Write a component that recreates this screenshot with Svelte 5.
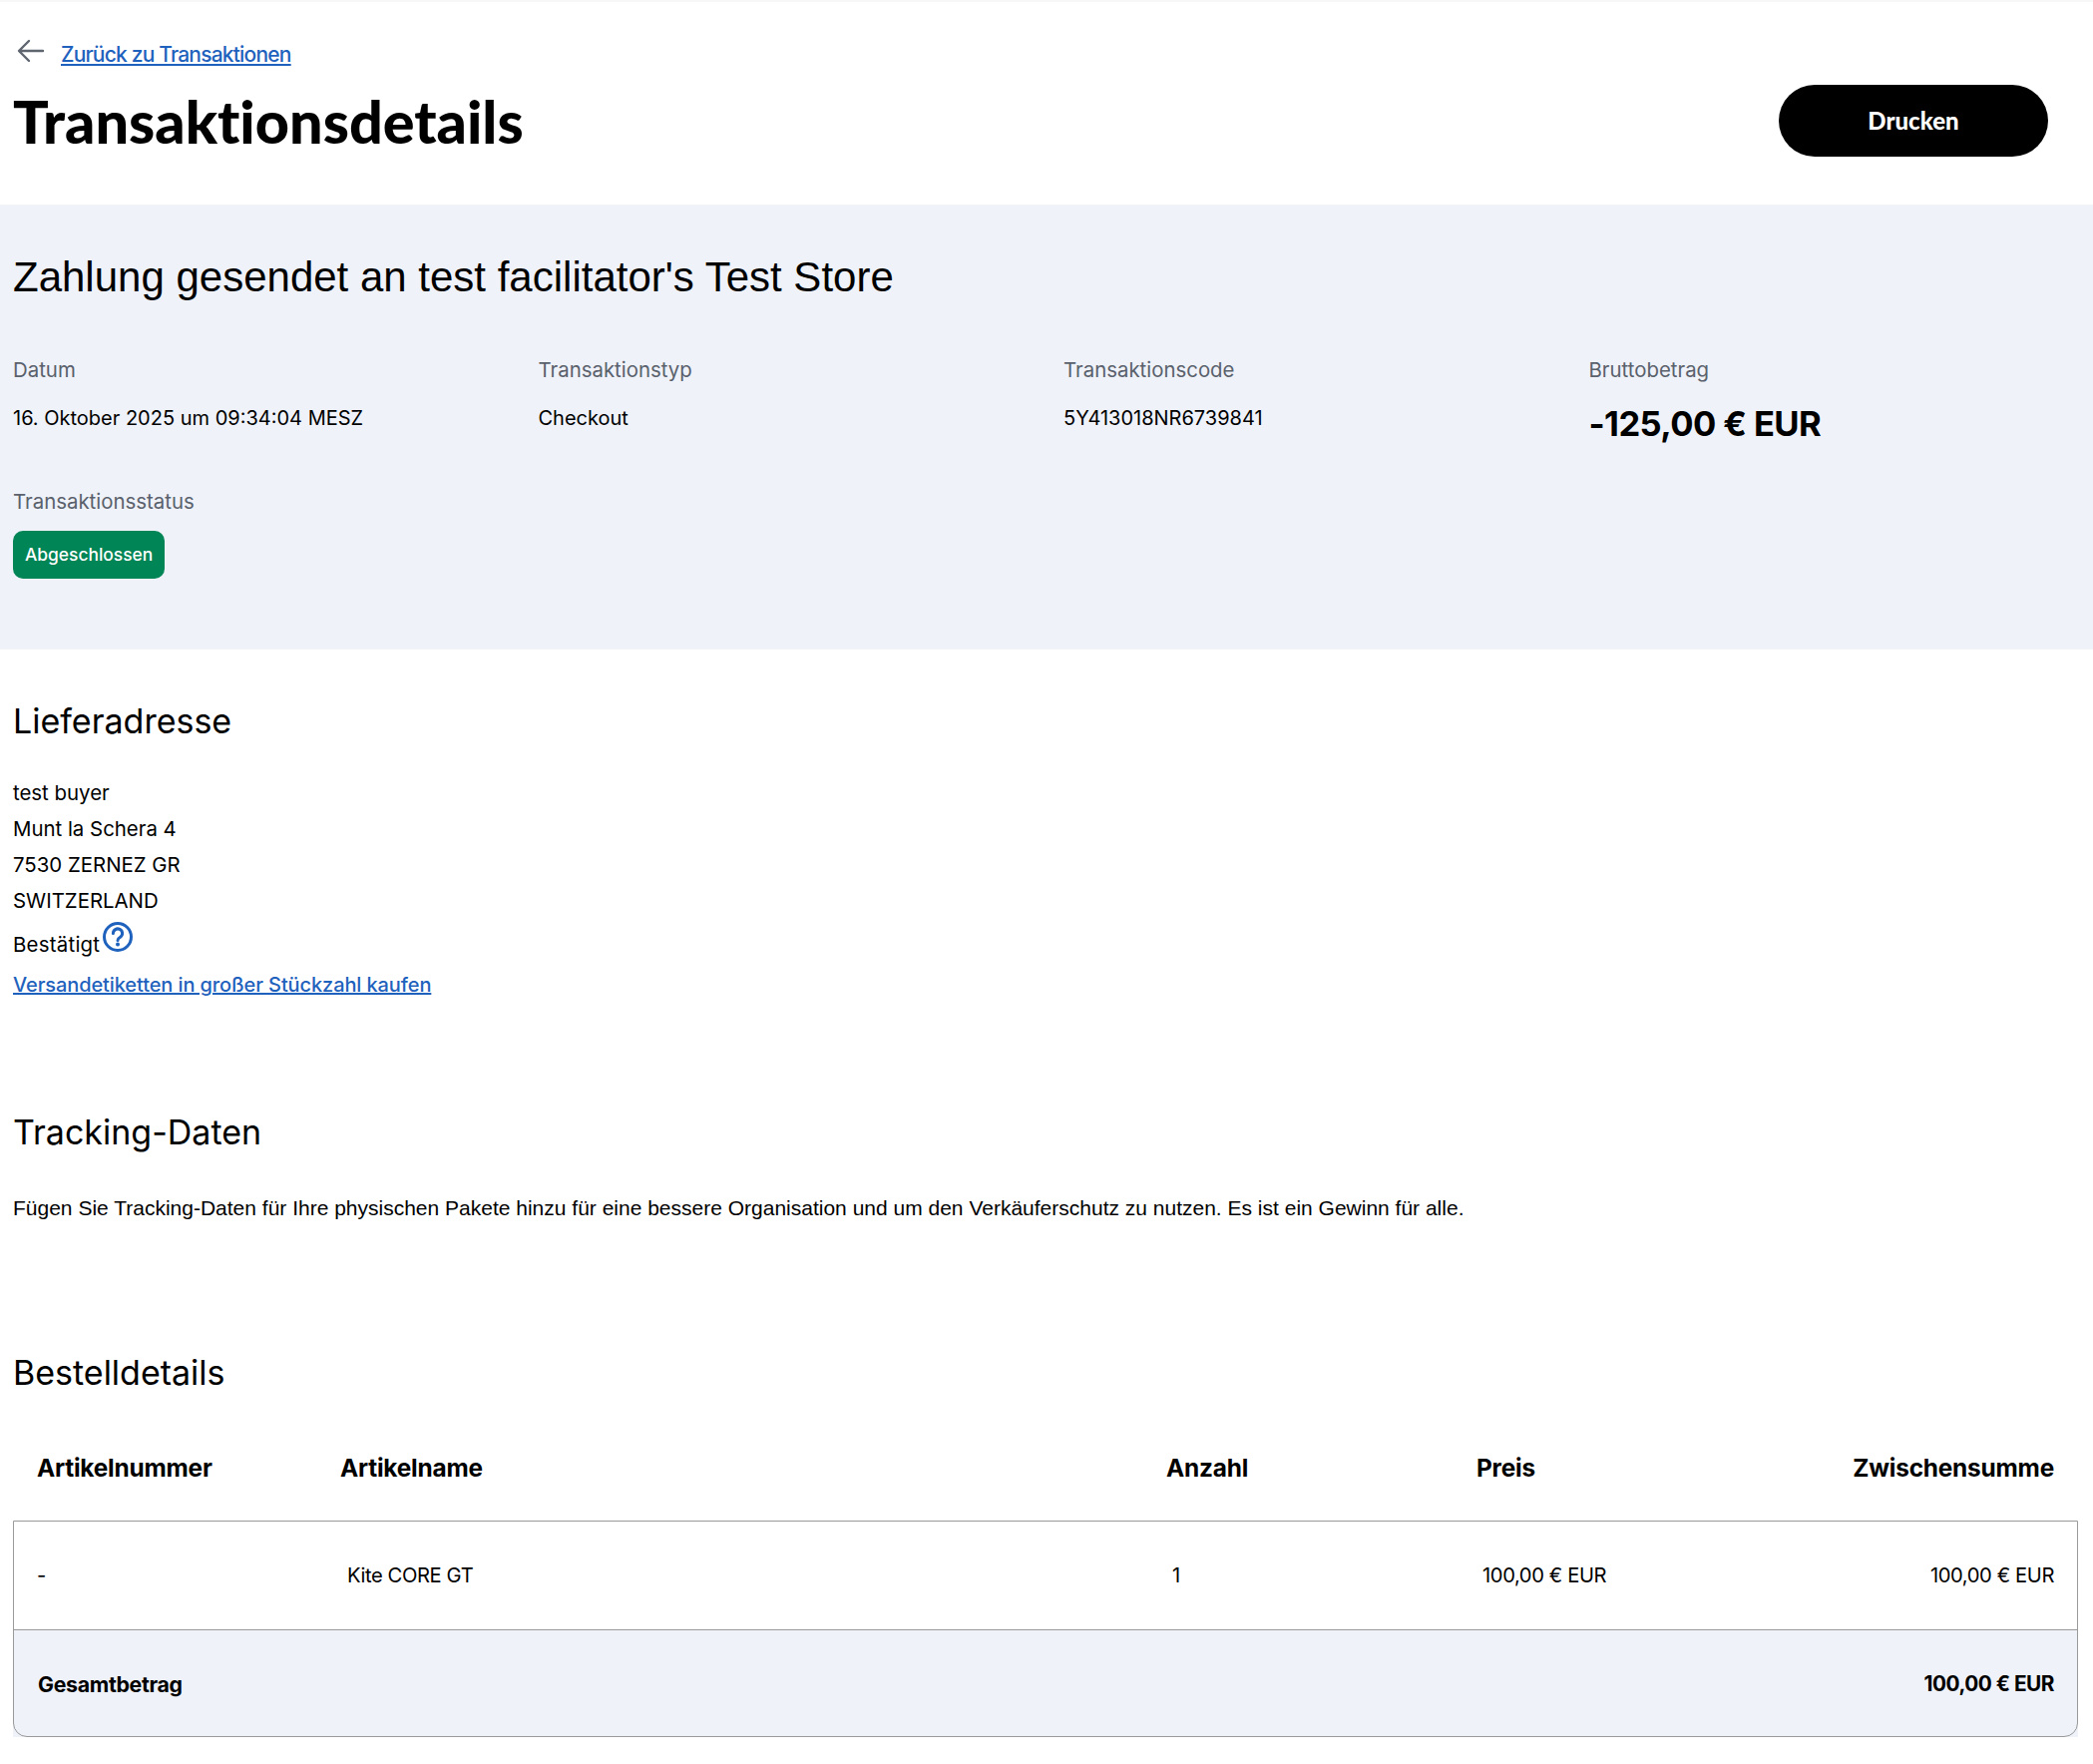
<script>
  const details = [
    { label: 'Datum', value: '16. Oktober 2025 um 09:34:04 MESZ' },
    { label: 'Transaktionstyp', value: 'Checkout' },
    { label: 'Transaktionscode', value: '5Y413018NR6739841' }
  ];
  const address = ['test buyer', 'Munt la Schera 4', '7530 ZERNEZ GR', 'SWITZERLAND'];
</script>

<div class="page">
  <header class="top">
    <div class="back">
      <svg class="arrow" width="30" height="26" viewBox="0 0 30 26" fill="none" stroke="#5f6670" stroke-width="2.4" stroke-linecap="round" stroke-linejoin="round"><path d="M27 13H4M13 3 3 13l10 10"/></svg>
      <a href="#top" class="link">Zurück zu Transaktionen</a>
    </div>
    <div class="titlebar">
      <h1>Transaktionsdetails</h1>
      <button class="print">Drucken</button>
    </div>
  </header>

  <section class="band">
    <h2 class="headline">Zahlung gesendet an test facilitator's Test Store</h2>
    <div class="grid">
      {#each details as d}
        <div>
          <div class="label">{d.label}</div>
          <div class="value">{d.value}</div>
        </div>
      {/each}
      <div>
        <div class="label">Bruttobetrag</div>
        <div class="amount">-125,00 € EUR</div>
      </div>
    </div>
    <div class="label status">Transaktionsstatus</div>
    <span class="badge">Abgeschlossen</span>
  </section>

  <section class="ship">
    <h2>Lieferadresse</h2>
    <div class="addr">
      {#each address as a}<div class="line">{a}</div>{/each}
      <div class="line confirmed">Bestätigt<svg class="help" width="32" height="32" viewBox="0 0 32 32" fill="none"><circle cx="16" cy="16" r="13.5" stroke="#1f62bd" stroke-width="3"/><path d="M11.4 12.6a4.6 4.6 0 1 1 7.2 3.7c-1.6 1-2.6 1.6-2.6 3.1" stroke="#1f62bd" stroke-width="3" stroke-linecap="round"/><circle cx="16" cy="23.6" r="2" fill="#1f62bd"/></svg></div>
      <a href="#top" class="link ship-link">Versandetiketten in großer Stückzahl kaufen</a>
    </div>
  </section>

  <section class="tracking">
    <h2>Tracking-Daten</h2>
    <p>Fügen Sie Tracking-Daten für Ihre physischen Pakete hinzu für eine bessere Organisation und um den Verkäuferschutz zu nutzen. Es ist ein Gewinn für alle.</p>
  </section>

  <section class="order">
    <h2>Bestelldetails</h2>
    <div class="thead">
      <div class="c1">Artikelnummer</div>
      <div class="c2">Artikelname</div>
      <div class="c3">Anzahl</div>
      <div class="c4">Preis</div>
      <div class="c5">Zwischensumme</div>
    </div>
    <div class="tbox">
      <div class="row">
        <div class="c1">-</div>
        <div class="c2 in">Kite CORE GT</div>
        <div class="c3 in2">1</div>
        <div class="c4 in">100,00 € EUR</div>
        <div class="c5">100,00 € EUR</div>
      </div>
      <div class="total">
        <div>Gesamtbetrag</div>
        <div class="total-num">100,00 € EUR</div>
      </div>
    </div>
  </section>
</div>

<style>
  :global(body) { margin: 0; background: #fff; }
  .page { font-family: Inter, "Liberation Sans", sans-serif; color: #000; width: 2098px; height: 1768px; overflow: hidden; border-top: 2px solid #f7f7f8; box-sizing: border-box; }
  h1, h2, p { margin: 0; font-weight: 400; }
  .link { color: #1f62bd; text-decoration: underline; font-weight: 500; }

  .top { padding: 0 45px 0 13px; height: 203px; }
  .back { display: flex; align-items: center; height: 46px; padding-top: 29px; font-size: 21px; letter-spacing: -0.8px; }
  .arrow { margin: 0 15px 0 3px; position: relative; top: -3px; }
  .titlebar { display: flex; justify-content: space-between; align-items: flex-start; }
  h1 { font-family: Lato, sans-serif; font-weight: 900; font-size: 59.3px; line-height: 68px; margin-top: 10px; font-variant-ligatures: none; }
  .print { width: 270px; height: 72px; margin-top: 8px; padding-bottom: 3px; border: 0; border-radius: 36px; background: #000; color: #fff; font-family: Lato, sans-serif; font-weight: 900; font-size: 24px; font-variant-ligatures: none; }

  .band { background: #eff2f9; height: 446px; box-sizing: border-box; padding: 48px 13px 0; }
  .headline { font-family: "Liberation Sans", sans-serif; font-size: 42px; line-height: 50px; }
  .grid { display: grid; grid-template-columns: repeat(4, 526.5px); margin-top: 55px; }
  .label { font-size: 20.4px; line-height: 26px; color: #5a616c; }
  .value { font-size: 20px; line-height: 26px; margin-top: 22px; }
  .amount { font-size: 34.6px; line-height: 44px; font-weight: 700; letter-spacing: -0.6px; margin-top: 18px; }
  .status { margin-top: 44px; }
  .badge { display: inline-block; margin-top: 16px; background: #008556; color: #fff; font-size: 17.4px; font-weight: 500; line-height: 48px; height: 48px; padding: 0 12px; border-radius: 10px; }

  h2 { font-size: 34px; line-height: 44px; }
  .ship { padding: 50px 13px 0; height: 416px; box-sizing: border-box; }
  .addr { margin-top: 32px; font-size: 20.4px; }
  .line { line-height: 36px; }
  .confirmed { display: flex; align-items: flex-start; height: 46px; line-height: 52px; letter-spacing: 0.25px; }
  .help { margin-top: 2px; margin-left: 2px; }
  .ship-link { display: block; line-height: 36px; font-size: 20px; margin-top: 2px; letter-spacing: -0.1px; }

  .tracking { padding: 46px 13px 0; height: 287px; box-sizing: border-box; }
  .tracking p { font-family: "Liberation Sans", sans-serif; font-size: 21px; line-height: 30px; margin-top: 39px; }

  .order { padding: 0 15px 0 13px; }
  .thead { display: flex; height: 106px; margin-top: 20px; align-items: center; font-size: 24.4px; font-weight: 700; letter-spacing: -0.2px; }
  .c1 { width: 328px; padding-left: 24px; box-sizing: border-box; }
  .c2 { width: 828px; box-sizing: border-box; }
  .c3 { width: 311px; box-sizing: border-box; }
  .c4 { width: 200px; box-sizing: border-box; }
  .c5 { flex: 1; text-align: right; padding-right: 24px; }
  .tbox { position: relative; height: 217px; box-sizing: border-box; }
  .tbox::after { content: ""; position: absolute; inset: 0; border: 1.5px solid #9a9a9a; border-radius: 0 0 14px 14px; pointer-events: none; }
  .row { display: flex; height: 109px; align-items: center; font-size: 20.2px; letter-spacing: -0.4px; }
  .in { padding-left: 7px; }
  .in2 { padding-left: 6px; }
  .row .c4 { padding-left: 6px; }
  .total { display: flex; justify-content: space-between; align-items: center; background: #eff2f9; border-top: 1.5px solid #9a9a9a; height: 108px; box-sizing: border-box; padding: 0 24px 0 25px; font-size: 21.3px; font-weight: 700; letter-spacing: -0.3px; }
  .total-num { font-size: 20.8px; letter-spacing: -0.5px; }
</style>
